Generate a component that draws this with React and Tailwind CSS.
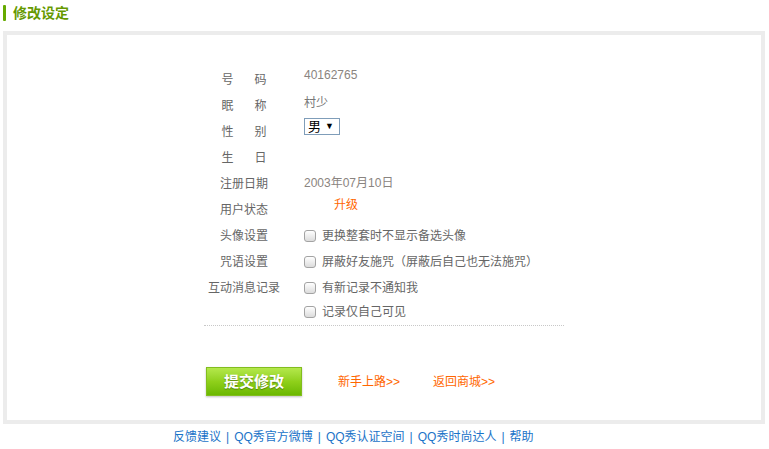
import React from "react";

const font = { fontFamily: '"Liberation Sans","Noto Sans CJK SC",sans-serif' };

function Check() {
  return (
    <span className="inline-block w-[12px] h-[12px] rounded-[3px] border border-[#a3a3a3] bg-gradient-to-b from-[#ffffff] to-[#dcdcdc] shrink-0" />
  );
}

function Row({ label, children }) {
  return (
    <div className="flex h-[26px] items-center">
      <div className="w-[80px] flex justify-center text-[#666]">{label}</div>
      <div className="ml-[20px] flex items-center">{children}</div>
    </div>
  );
}

function Two({ a, b }) {
  return (
    <span className="inline-flex gap-[21px]">
      <span>{a}</span>
      <span>{b}</span>
    </span>
  );
}

function CheckItem({ text }) {
  return (
    <span className="flex items-center gap-[6px] text-[#666]">
      <Check />
      <span>{text}</span>
    </span>
  );
}

export default function App() {
  return (
    <div className="w-[769px] h-[449px] bg-white text-[12px] leading-none overflow-hidden" style={font}>
      <div className="flex items-center h-[31px] pl-[3px] pb-[6px]">
        <span className="w-[3px] h-[16px] bg-[#66aa00] rounded-[1px]" />
        <span className="ml-[7px] text-[14px] font-bold text-[#669900]">修改设定</span>
      </div>
      <div className="ml-[3px] w-[762px] h-[393px] border-4 border-[#ececec] bg-white">
        <div className="ml-[197px] pt-[32px] w-[360px]">
          <div className="border-b border-dotted border-[#c8c8c8]">
            <Row label={<Two a="号" b="码" />}>
              <span className="text-[#8a8480] pb-[10px]">40162765</span>
            </Row>
            <Row label={<Two a="眠" b="称" />}>
              <span className="text-[#777] pb-[6px]">村少</span>
            </Row>
            <Row label={<Two a="性" b="别" />}>
              <span className="mb-[11px] flex items-center w-[36px] h-[17px] border border-[#7f9db9] bg-white text-black text-[13px] pl-[3px]">
                <span>男</span>
                <span className="ml-[4px] text-[9px]">▼</span>
              </span>
            </Row>
            <Row label={<Two a="生" b="日" />}>
              <span />
            </Row>
            <Row label="注册日期">
              <span className="text-[#8a8480] pb-[2px]">2003年07月10日</span>
            </Row>
            <Row label="用户状态">
              <span className="ml-[30px] text-[#ff6600] pb-[10px]">升级</span>
            </Row>
            <Row label="头像设置">
              <CheckItem text="更换整套时不显示备选头像" />
            </Row>
            <Row label="咒语设置">
              <CheckItem text="屏蔽好友施咒（屏蔽后自己也无法施咒）" />
            </Row>
            <Row label="互动消息记录">
              <CheckItem text="有新记录不通知我" />
            </Row>
            <div className="flex h-[24px] items-center">
              <div className="w-[80px]" />
              <div className="ml-[20px] pb-[2px]">
                <CheckItem text="记录仅自己可见" />
              </div>
            </div>
          </div>
          <div className="flex items-center mt-[41px] pl-[2px]">
            <button className="w-[96px] h-[29px] border border-[#82bd1e] bg-gradient-to-b from-[#b4e84a] via-[#8fd01a] to-[#6bb800] text-white font-bold text-[15px] shadow-[0_1px_2px_rgba(0,0,0,0.25)] [text-shadow:0_1px_1px_rgba(0,0,0,0.35)]">
              提交修改
            </button>
            <span className="ml-[36px] text-[#ff6600]">新手上路&gt;&gt;</span>
            <span className="ml-[33px] text-[#ff6600]">返回商城&gt;&gt;</span>
          </div>
        </div>
      </div>
      <div className="flex items-center h-[25px] pl-[173px] text-[#1a73c8]">
        <span>反馈建议</span>
        <span className="mx-[5px]">|</span>
        <span>QQ秀官方微博</span>
        <span className="mx-[5px]">|</span>
        <span>QQ秀认证空间</span>
        <span className="mx-[5px]">|</span>
        <span>QQ秀时尚达人</span>
        <span className="mx-[5px]">|</span>
        <span>帮助</span>
      </div>
    </div>
  );
}
